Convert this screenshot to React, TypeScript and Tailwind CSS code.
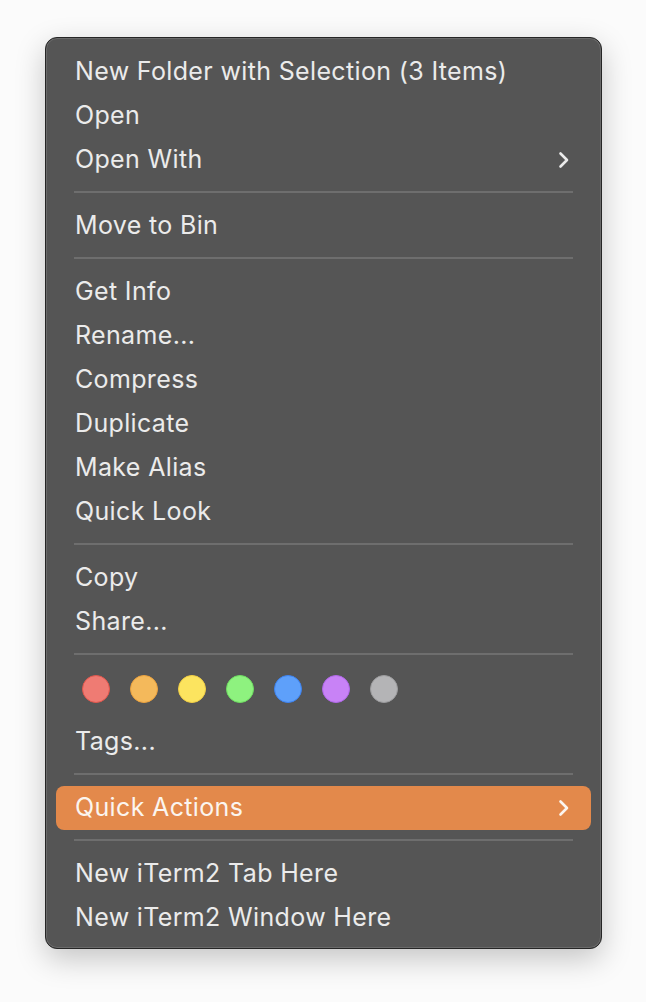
type Entry =
  | { kind: "item"; label: string; sub?: boolean; active?: boolean }
  | { kind: "sep" }
  | { kind: "tags" };

const entries: Entry[] = [
  { kind: "item", label: "New Folder with Selection (3 Items)" },
  { kind: "item", label: "Open" },
  { kind: "item", label: "Open With", sub: true },
  { kind: "sep" },
  { kind: "item", label: "Move to Bin" },
  { kind: "sep" },
  { kind: "item", label: "Get Info" },
  { kind: "item", label: "Rename..." },
  { kind: "item", label: "Compress" },
  { kind: "item", label: "Duplicate" },
  { kind: "item", label: "Make Alias" },
  { kind: "item", label: "Quick Look" },
  { kind: "sep" },
  { kind: "item", label: "Copy" },
  { kind: "item", label: "Share..." },
  { kind: "sep" },
  { kind: "tags" },
  { kind: "item", label: "Tags..." },
  { kind: "sep" },
  { kind: "item", label: "Quick Actions", sub: true, active: true },
  { kind: "sep" },
  { kind: "item", label: "New iTerm2 Tab Here" },
  { kind: "item", label: "New iTerm2 Window Here" },
];

const tagColors = [
  "bg-[#ef7b73] border-[#e2564c]",
  "bg-[#f4b95b] border-[#eca23e]",
  "bg-[#fce45f] border-[#f2cf45]",
  "bg-[#8ef27f] border-[#6ede61]",
  "bg-[#5ea0fa] border-[#3d83f2]",
  "bg-[#c882f6] border-[#b067ea]",
  "bg-[#b4b4b6] border-[#9c9c9e]",
];

// macOS submenu chevron
function Chevron() {
  return (
    <svg width="12" height="18" viewBox="0 0 12 18" fill="none" className="shrink-0">
      <path d="M2.5 2.5 L9 9 L2.5 15.5" stroke="currentColor" strokeWidth="2.6" strokeLinecap="round" strokeLinejoin="round" />
    </svg>
  );
}

export default function App() {
  return (
    <div
      className="w-[646px] h-[1002px] bg-[#fbfbfb] pt-[37px] pl-[45px]"
      style={{ fontFamily: "Inter, 'Noto Sans', sans-serif" }}
    >
      <div className="w-[557px] rounded-[12px] border border-[#262626] bg-[#555555] shadow-[inset_0_0_0_1px_#6a6a6a,0_10px_30px_rgba(0,0,0,0.22)] px-[10px] pt-[12px] pb-[8px]">
        {entries.map((e, i) => {
          if (e.kind === "sep") {
            return <div key={i} className="mx-[18px] mt-[9px] mb-[11px] h-[2px] bg-[#6e6e6e]" />;
          }
          if (e.kind === "tags") {
            return (
              <div key={i} className="flex gap-[20px] pl-[26px] pt-[9px] pb-[17px]">
                {tagColors.map((c, j) => (
                  <span key={j} className={`w-[28px] h-[28px] rounded-full border-[1.5px] ${c}`} />
                ))}
              </div>
            );
          }
          return (
            <div
              key={i}
              className={`flex h-[44px] items-center justify-between rounded-[8px] pl-[19px] pr-[21px] text-[25px] tracking-[0.35px] text-[#ebebeb] ${
                e.active ? "bg-[#e3894b] text-[#fbf5ef]" : ""
              }`}
            >
              <span>{e.label}</span>
              {e.sub && <Chevron />}
            </div>
          );
        })}
      </div>
    </div>
  );
}
